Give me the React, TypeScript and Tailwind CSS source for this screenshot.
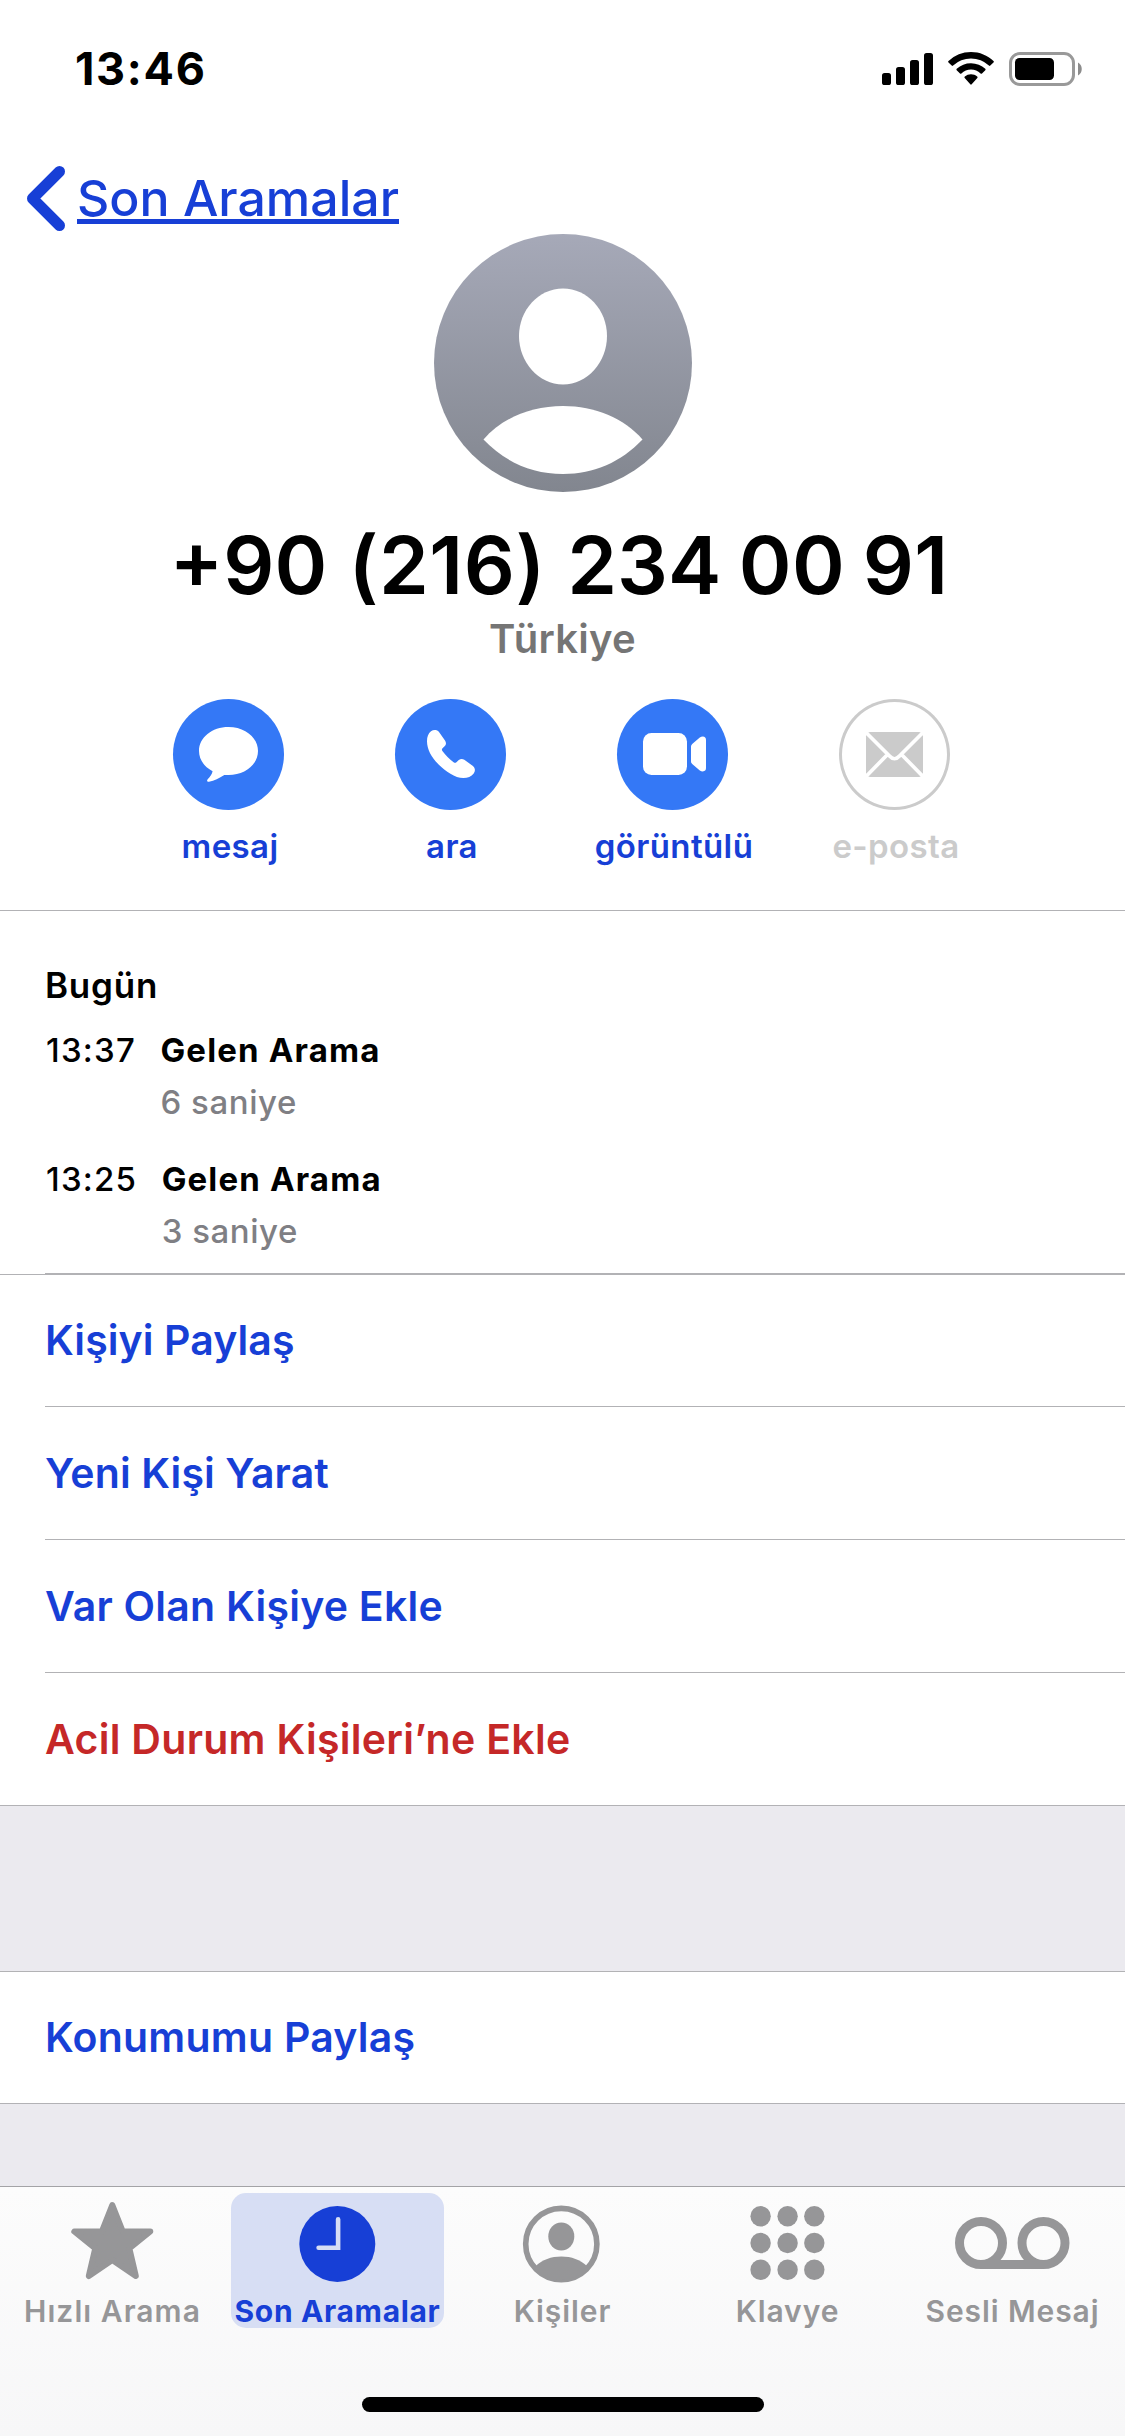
import type { ReactNode } from "react";
import clsx from "clsx";

const BLUE = "#173fd6";
const GRAY = "#969698";

function StatusBar() {
  return (
    <div className="flex h-[138px] items-center justify-between pl-[75px] pr-[42px]">
      <span className="text-[45px] font-bold leading-[54px] tracking-[1.7px]">13:46</span>
      <svg width="201" height="34" viewBox="0 0 201 34">
        <rect x="0" y="21" width="9" height="12" rx="2.6" />
        <rect x="14" y="15" width="9" height="18" rx="2.6" />
        <rect x="28" y="8" width="9" height="25" rx="2.6" />
        <rect x="42" y="1" width="9" height="32" rx="2.6" />
        <path d="M89 0c8.700 0 16.600 3.400 22.500 9q.7.700 0 1.400l-3.200 3.200q-.7.600-1.400 0a26 26 0 0 0-35.800 0q-.7.600-1.400 0l-3.200-3.200q-.7-.7 0-1.400A32.600 32.600 0 0 1 89 0z" />
        <path d="M89 11.200c5.500 0 10.500 2.100 14.300 5.600q.7.700 0 1.400l-3.300 3.200q-.7.600-1.400 0a14 14 0 0 0-19.200 0q-.7.600-1.400 0l-3.300-3.200q-.7-.7 0-1.400A21 21 0 0 1 89 11.200z" />
        <path d="M89 22.300c2.300 0 4.500.8 6.200 2.300q.8.700.1 1.400l-5.600 6.300q-.7.700-1.400 0l-5.600-6.300q-.7-.7.100-1.400a9.400 9.400 0 0 1 6.200-2.300z" />
        <rect x="128.500" y="1.500" width="63" height="31" rx="9.500" fill="none" stroke="#999" strokeWidth="3" />
        <rect x="133" y="6" width="39" height="22" rx="4.500" />
        <path d="M196 10.500v13a7.500 7.500 0 0 0 0-13z" fill="#8c8c8c" />
      </svg>
    </div>
  );
}

function Avatar() {
  return (
    <svg className="mx-auto block" width="258" height="258" viewBox="0 0 258 258">
      <defs>
        <linearGradient id="avatar" x1="0" y1="0" x2="0" y2="1">
          <stop offset="0" stopColor="#a6a9b8" />
          <stop offset="1" stopColor="#82868f" />
        </linearGradient>
      </defs>
      <circle cx="129" cy="129" r="129" fill="url(#avatar)" />
      <path
        d="M129 54.500c24.500 0 44 21.500 44 47.500s-19.500 48.500-44 48.500-44-22.500-44-48.500 19.500-47.500 44-47.500z"
        fill="#fff"
      />
      <path d="M49.500 205.500C68 184 97 172 129 172s61 12 79.500 33.500C187 228 160 240 129 240s-58-12-79.500-34.500z" fill="#fff" />
    </svg>
  );
}

const actions: { label: string; disabled?: boolean; icon: ReactNode }[] = [
  {
    label: "mesaj",
    icon: (
      <path d="M55.500 28C72 28 85 38.500 85 52S72 76 55.500 76c-1.500 0-3 0-4.200.1C46 79 41.500 82 36 82.800c-1.800.3-2.500-1.200-1.300-2.600 2.200-2.400 4.300-4.600 4.900-8C31.500 68 26 60.800 26 52c0-13.500 13-24 29.500-24z" />
    ),
  },
  {
    label: "ara",
    icon: (
      <path d="M36 32.300C38.500 30.400 42 30.500 44 33l6 8.600c1.400 2.200 1.300 4-.4 5.700L47.500 49.200c-.8.900-.8 1.600-.1 2.700 3 4.200 7 8.200 11.200 11.300 1.100.8 1.900.8 2.800 0l2.400-2.100c1.800-1.500 3.600-1.600 5.500-.3l8.300 5.900c2.700 2 3 5.200 1.100 7.900-2.300 3.200-6 4.400-10.300 4.400-8.400-.2-17.800-6.600-24.800-13.600S32 50.600 32 42.200c0-4.300 1.200-7.700 4-9.900z" />
    ),
  },
  {
    label: "görüntülü",
    icon: (
      <>
        <rect x="26" y="34" width="44" height="42" rx="8.500" />
        <path d="M74 47.500q0-1.500 1.200-2.500l7.600-6.400q1.400-1 3-1 3.200.2 3.200 3.400v28q0 3.200-3.200 3.400-1.600 0-3-1L75.200 65Q74 64 74 62.500z" />
      </>
    ),
  },
  {
    label: "e-posta",
    disabled: true,
    icon: (
      <>
        <rect x="27" y="33" width="57" height="45" rx="4.500" />
        <path
          d="M26 32.500 50.500 57q5 5.500 10 0L85 32.500M48.500 55.500 26 78.500M62.500 55.500 85 78.500"
          fill="none"
          stroke="#fff"
          strokeWidth="3.700"
        />
      </>
    ),
  },
];

function Actions() {
  return (
    <div className="ml-[117.5px] mt-[38px] grid grid-cols-[repeat(4,222px)]">
      {actions.map((a) => (
        <div key={a.label} className="flex flex-col items-center">
          <div
            className={clsx(
              "size-[111px] rounded-full",
              a.disabled ? "bg-white shadow-[inset_0_0_0_3px_#cbcbcb]" : "bg-[#3478f6]",
            )}
          >
            <svg width="111" height="111" viewBox="0 0 111 111" fill={a.disabled ? "#cbcbcb" : "#fff"}>
              {a.icon}
            </svg>
          </div>
          <span
            className={clsx(
              "mt-4 pl-[3px] text-[33px] font-semibold leading-10 tracking-[0.4px]",
              a.disabled ? "text-[#cbcbcb]" : "text-[#173fd6]",
            )}
          >
            {a.label}
          </span>
        </div>
      ))}
    </div>
  );
}

function Call({ time, duration, className }: { time: string; duration: string; className: string }) {
  return (
    <div className={clsx("ml-px grid grid-cols-[auto_1fr] gap-x-[24.500px] text-[33px] leading-[44px]", className)}>
      <span className="font-medium tracking-[1.2px]">{time}</span>
      <span className="font-bold tracking-[1.150px]">Gelen Arama</span>
      <span className="col-start-2 mt-2 font-medium tracking-[0.55px] text-[#7f7f84]">{duration}</span>
    </div>
  );
}

function Row({ label, className }: { label: string; className: string }) {
  return (
    <div className={clsx("flex items-center text-[41px] font-semibold leading-[50px]", className)}>{label}</div>
  );
}

const tabs: { label: string; active?: boolean; className: string; icon: ReactNode }[] = [
  {
    label: "Hızlı Arama",
    className: "tracking-[1.05px]",
    // the stroke softens the tips of the star
    icon: (
      <path
        d="M62 12 72.500 38.500H100L79 55.300 85.500 83 62 67 38.500 83 45 55.300 24 38.500h27.500z"
        stroke={GRAY}
        strokeWidth="6"
        strokeLinejoin="round"
      />
    ),
  },
  {
    label: "Son Aramalar",
    active: true,
    className: "tracking-[0.66px]",
    icon: (
      <>
        <circle cx="62" cy="51" r="38" fill={BLUE} />
        <path d="M62.800 26.300v28.500H43.300" fill="none" stroke="#d7def4" strokeWidth="4.600" strokeLinecap="round" />
      </>
    ),
  },
  {
    label: "Kişiler",
    className: "tracking-[0.93px]",
    icon: (
      <>
        <circle cx="61" cy="51" r="35.600" fill="none" stroke={GRAY} strokeWidth="5.600" />
        <ellipse cx="61" cy="43.500" rx="13" ry="14" />
        <path d="M35 73.500C42 66.500 51 63.500 61 63.500S80 66.500 87 73.500C80 83 71 87 61 87S42 83 35 73.500z" />
      </>
    ),
  },
  {
    label: "Klavye",
    className: "tracking-[0.92px]",
    icon: [23.3, 50, 76.7].map((y) =>
      [35.3, 62.3, 89].map((x) => <circle key={`${x}-${y}`} cx={x} cy={y} r="10.2" />),
    ),
  },
  {
    label: "Sesli Mesaj",
    className: "tracking-[0.9px]",
    icon: (
      <g fill="none" stroke={GRAY} strokeWidth="9">
        <circle cx="30.700" cy="50" r="21.500" />
        <circle cx="93.200" cy="50" r="21.500" />
        <path d="M30.700 71.500h62.500" />
      </g>
    ),
  },
];

function TabBar() {
  return (
    <div className="h-[250px] border-t border-[#a3a3a6] bg-linear-to-b from-[#fcfcfc] to-[#f7f7f8] pt-[6px]">
      <div className="grid grid-cols-5">
        {tabs.map((t) => (
          <div key={t.label} className="flex justify-center">
            <div
              className={clsx(
                "flex h-[135px] w-[213px] flex-col items-center rounded-[15px]",
                t.active && "bg-[#d7def4]",
              )}
            >
              <svg className="shrink-0" width="124" height="101" viewBox="0.7 0 124 101" fill={GRAY}>
                {t.icon}
              </svg>
              <span
                className={clsx(
                  "whitespace-nowrap text-[30px] leading-[35px]",
                  t.active ? "font-bold text-[#173fd6]" : "font-semibold text-[#969698]",
                  t.className,
                )}
              >
                {t.label}
              </span>
            </div>
          </div>
        ))}
      </div>
      <div className="mx-auto mt-[69px] h-[15px] w-[402px] rounded-full bg-black" />
    </div>
  );
}

export default function App() {
  return (
    <div className="flex h-[2436px] w-[1125px] flex-col overflow-hidden bg-white font-['Inter',sans-serif] text-black">
      <StatusBar />
      <div className="flex h-24 items-center pl-[27px] pt-6">
        <svg width="38" height="65" viewBox="0 0 38 65">
          <path
            d="M32.500 5.500 5.500 32.500l27 27"
            fill="none"
            stroke={BLUE}
            strokeWidth="11"
            strokeLinecap="round"
            strokeLinejoin="round"
          />
        </svg>
        <a className="ml-3 text-[50px] font-medium leading-[60px] text-[#173fd6] underline decoration-[5px] underline-offset-[3px] [text-decoration-skip-ink:none]">
          Son Aramalar
        </a>
      </div>
      <Avatar />
      <h1 className="mt-[22px] whitespace-nowrap pr-[7px] text-center text-[80px] font-semibold leading-[102px] [word-spacing:1px]">
        +90 <span className="tracking-[0.6px]">(216)</span> 234
        <span className="tracking-[0.4px] [word-spacing:-3px]"> 00 91</span>
      </h1>
      <p className="text-center text-[40px] font-semibold leading-[45px] tracking-[0.27px] text-[#757575]">Türkiye</p>
      <Actions />

      <div className="mt-[44px] border-t border-[#b2b2b5] pl-[45px] pt-[52px]">
        <h2 className="text-[35px] font-semibold leading-[44px] tracking-[0.8px]">Bugün</h2>
        <Call time="13:37" duration="6 saniye" className="mt-[21px]" />
        <Call time="13:25" duration="3 saniye" className="mt-[33px]" />
      </div>
      <div className="ml-[45px] mt-[20px] h-px shrink-0 bg-[#b2b2b5]" />

      <div className="border-y border-[#b2b2b5] pl-[45px] text-[#173fd6]">
        <Row label="Kişiyi Paylaş" className="h-[131px] pb-px tracking-[0.09px]" />
        <Row label="Yeni Kişi Yarat" className="h-[133px] border-t border-[#b2b2b5] tracking-[0.12px]" />
        <Row label="Var Olan Kişiye Ekle" className="h-[133px] border-t border-[#b2b2b5] tracking-[0.24px]" />
        <Row
          label="Acil Durum Kişileri’ne Ekle"
          className="h-[133px] border-t border-[#b2b2b5] tracking-[0.29px] text-[#c52828]"
        />
      </div>
      <div className="h-[165px] bg-[#ebeaef]" />
      <div className="border-y border-[#b2b2b5] pl-[45px] text-[#173fd6]">
        <Row label="Konumumu Paylaş" className="h-[131px] pb-px tracking-[0.24px]" />
      </div>
      <div className="h-[82px] bg-[#ebeaef]" />
      <TabBar />
    </div>
  );
}
